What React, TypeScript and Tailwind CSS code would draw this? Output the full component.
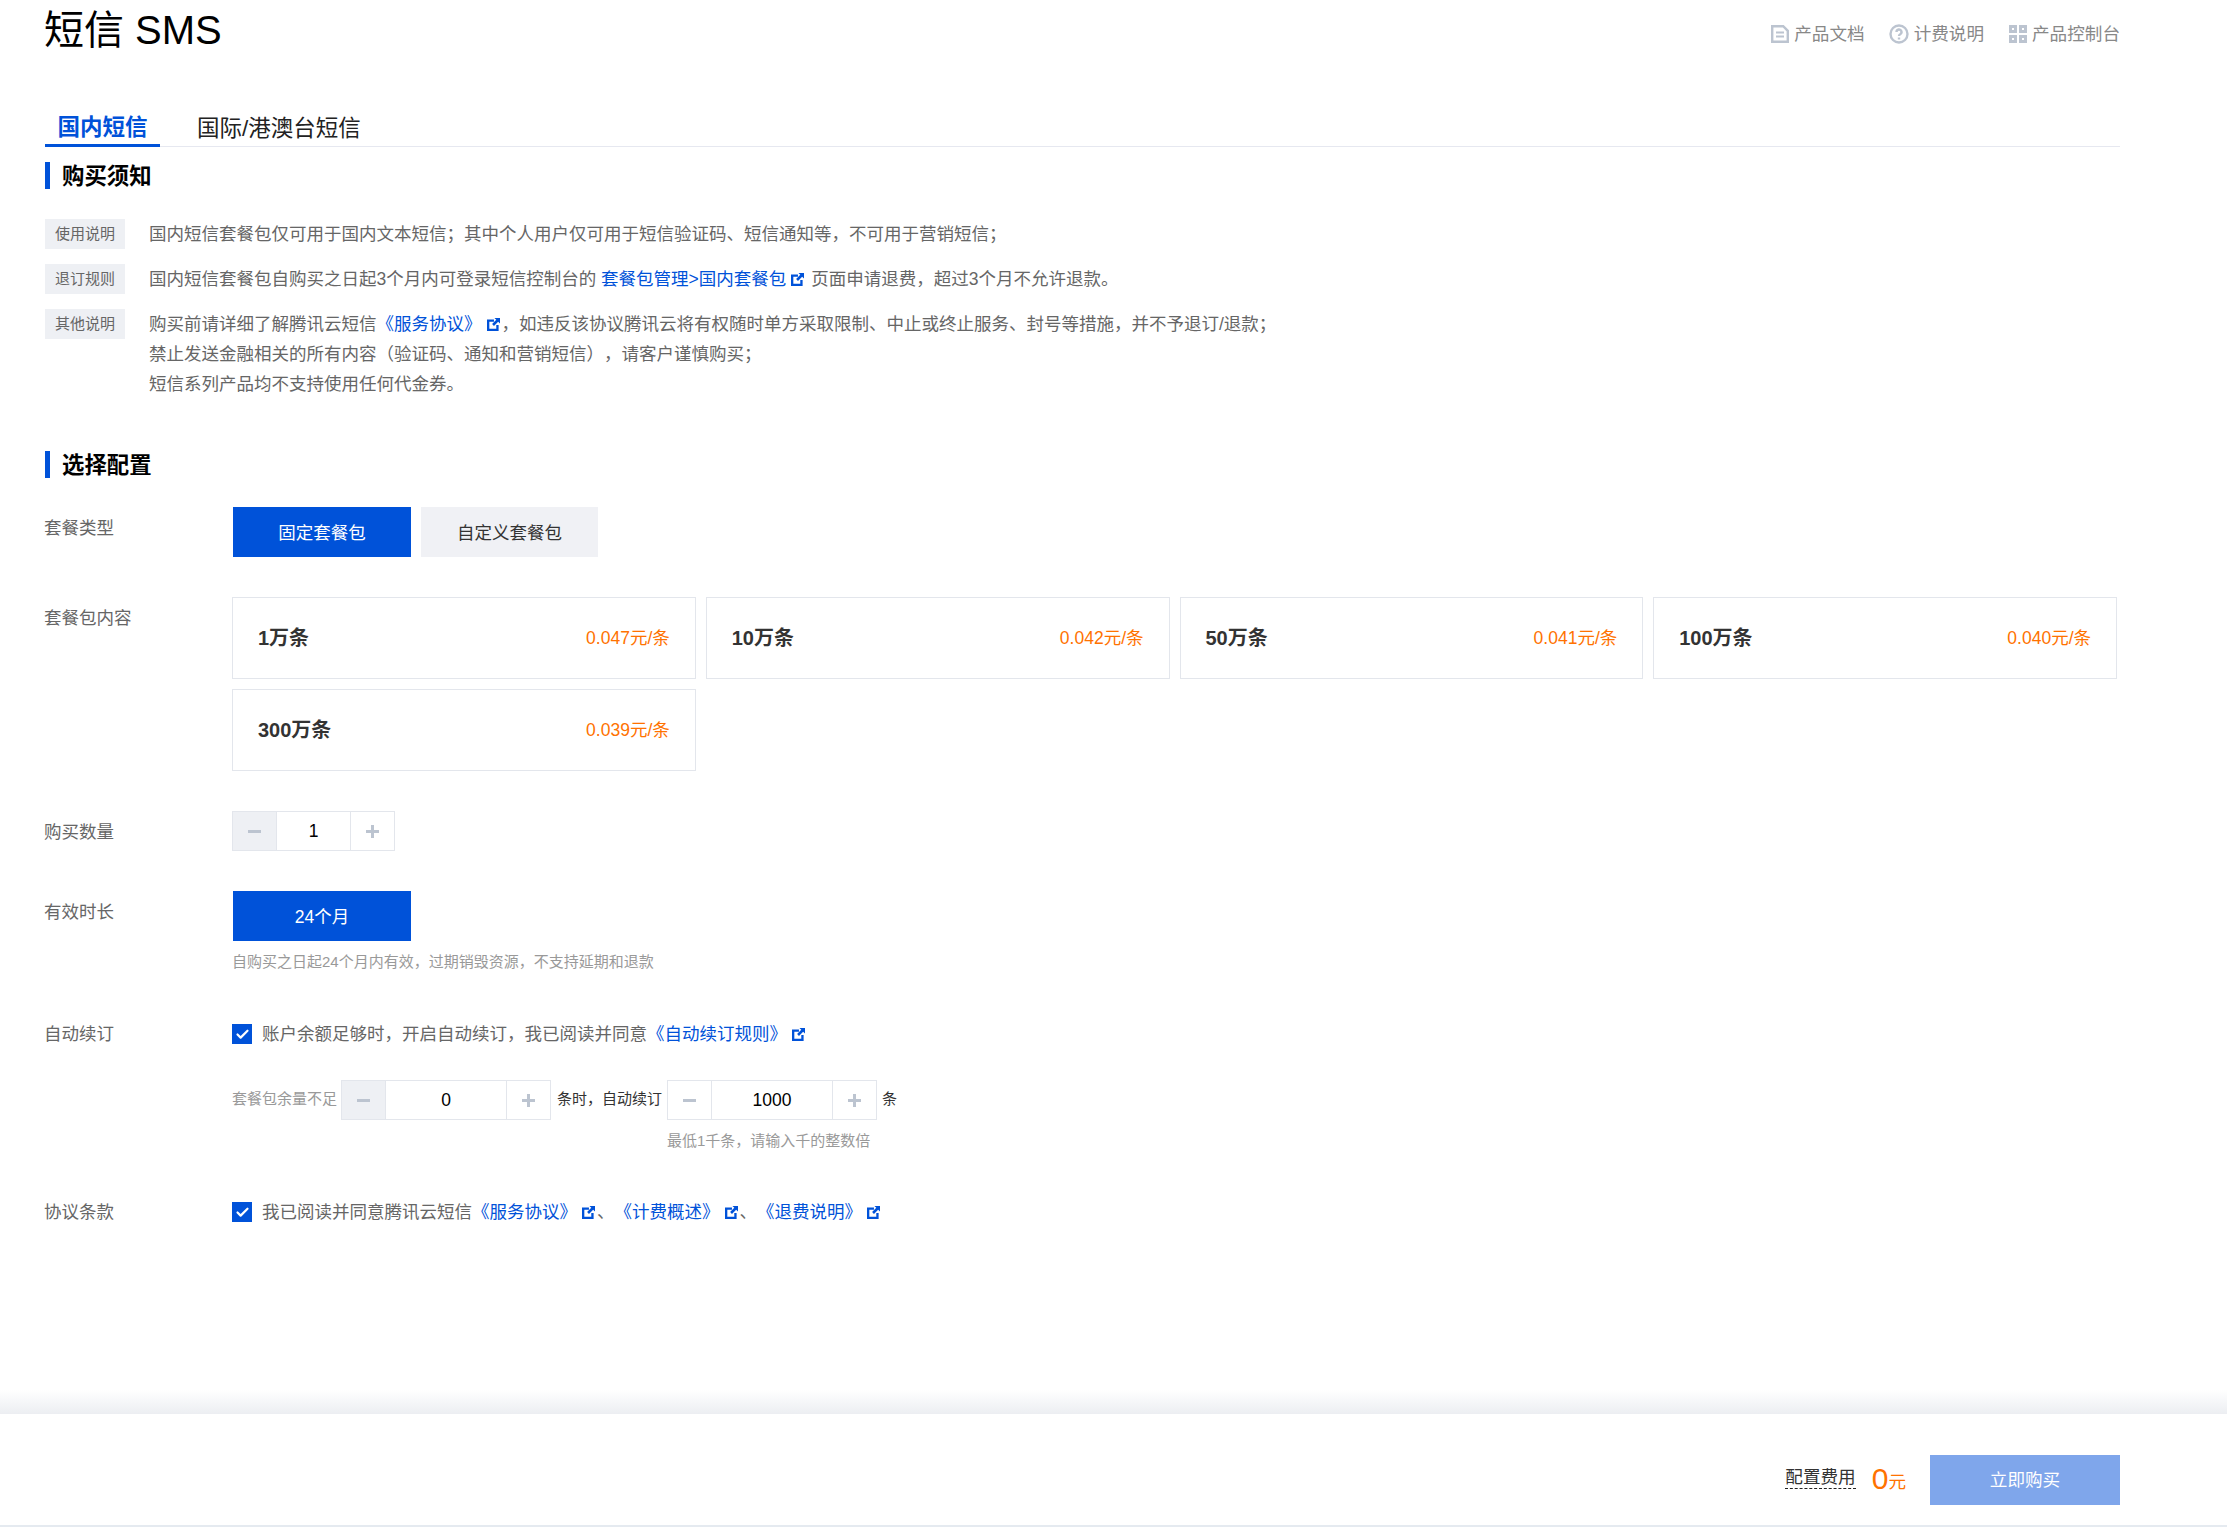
import React from 'react';
import { Check } from 'lucide-react';

const FONT = '"Liberation Sans", "Noto Sans CJK SC", sans-serif';

const PACKAGES = [
  { name: '1万条', price: '0.047元/条' },
  { name: '10万条', price: '0.042元/条' },
  { name: '50万条', price: '0.041元/条' },
  { name: '100万条', price: '0.040元/条' },
  { name: '300万条', price: '0.039元/条' },
];

const ExternalIcon = () => (
  <svg viewBox="0 0 14 14" className="ml-[5px] mr-[2px] inline-block h-[13px] w-[13px] align-[-1px]">
    <path d="M0 1.500h7.500v2.500H2.500v7.500H10V7.500h2.500V14H0z" fill="#0052d9" />
    <path d="M8 0h6v6l-2-2-4.500 4.500-2-2L10 2z" fill="#0052d9" />
  </svg>
);

const Link = ({ children }: { children: React.ReactNode }) => (
  <span className="text-[#0052d9]">
    {children}
    <ExternalIcon />
  </span>
);

const SectionTitle = ({ children, className }: { children: string; className: string }) => (
  <div className={`flex h-[27px] items-center border-l-[5px] border-[#0052d9] pl-3 pt-[2px] text-[22.4px] font-bold text-black ${className}`}>
    {children}
  </div>
);

const Tag = ({ children }: { children: string }) => (
  <span className="flex h-[30px] w-20 shrink-0 items-center justify-center bg-[#eef0f4] text-[15px] text-[#666]">
    {children}
  </span>
);

const Checkbox = () => (
  <span className="flex h-5 w-5 shrink-0 items-center justify-center bg-[#0052d9] text-white">
    <Check size={15} strokeWidth={3.5} />
  </span>
);

const Stepper = ({ value, width, grayMinus }: { value: string; width: number; grayMinus?: boolean }) => (
  <div className="flex h-10 shrink-0 border border-[#e3e6ec] text-[17.5px] text-black">
    <span className={`flex w-11 items-center justify-center border-r border-[#e3e6ec] ${grayMinus ? 'bg-[#eef0f4]' : 'bg-white'}`}>
      <span className="h-[3px] w-[13px] bg-[#bcc4d0]" />
    </span>
    <span className="flex items-center justify-center" style={{ width }}>
      {value}
    </span>
    <span className="relative flex w-11 items-center justify-center border-l border-[#e3e6ec]">
      <span className="h-[3px] w-[13px] bg-[#bcc4d0]" />
      <span className="absolute h-[13px] w-[3px] bg-[#bcc4d0]" />
    </span>
  </div>
);

const Label = ({ children, className = '' }: { children: string; className?: string }) => (
  <div className={`-ml-px w-[188px] shrink-0 text-[17.5px] text-[#666] ${className}`}>{children}</div>
);

export default function App() {
  return (
    <div className="flex h-[1527px] w-[2227px] flex-col overflow-hidden bg-white [text-spacing-trim:space-all]" style={{ fontFamily: FONT }}>
      <div className="flex-1 pl-[45px] pr-[107px]">
        <div className="flex h-[58px] items-center justify-between">
          <h1 className="-ml-px pt-[1px] text-[40px] font-normal leading-[58px] text-black">短信 SMS</h1>
          <div className="mt-[10px] flex items-center text-[17.6px] text-[#888]">
            <svg viewBox="0 0 18 18" className="mr-[5px] h-[18px] w-[18px]" fill="none" stroke="#bcc4d0" strokeWidth="2.400">
              <path d="M1.200 1.200h11l4.600 4.600v11H1.200z" />
              <path d="M5 7.500h8M5 11.500h8" strokeWidth="2" />
            </svg>
            产品文档
            <svg viewBox="0 0 20 20" className="ml-[24px] mr-[5px] h-5 w-5" fill="none" stroke="#bcc4d0" strokeWidth="2.400">
              <circle cx="10" cy="10" r="8.500" />
              <path d="M7.500 8a2.500 2.500 0 1 1 3.700 2.200c-.8.4-1.200.9-1.200 1.800" />
              <path d="M10 13.500v2" />
            </svg>
            计费说明
            <svg viewBox="0 0 18 18" className="ml-[25px] mr-[5px] h-[18px] w-[18px]" fill="none" stroke="#bcc4d0" strokeWidth="3">
              <path d="M1.500 1.500h5v5h-5zM11.500 1.500h5v5h-5zM1.500 11.500h5v5h-5zM11.500 11.500h5v5h-5z" />
            </svg>
            产品控制台
          </div>
        </div>

        <div className="mt-[42px] flex h-[47px] border-b border-[#e6e8f0] text-[22.5px]">
          <div className="-mb-px flex h-[47px] w-[115px] items-center justify-center border-b-[3px] border-[#0052d9] pt-[12px] font-bold text-[#0052d9]">
            国内短信
          </div>
          <div className="ml-[37px] flex items-center pt-[11px] text-[#222]">国际/港澳台短信</div>
        </div>

        <SectionTitle className="mt-[15px]">购买须知</SectionTitle>

        <div className="mt-[30px] flex flex-col gap-[15px] text-[17.5px] leading-[30px] text-[#666]">
          <div className="flex gap-6">
            <Tag>使用说明</Tag>
            <p>国内短信套餐包仅可用于国内文本短信；其中个人用户仅可用于短信验证码、短信通知等，不可用于营销短信；</p>
          </div>
          <div className="flex gap-6">
            <Tag>退订规则</Tag>
            <p>
              国内短信套餐包自购买之日起3个月内可登录短信控制台的 <Link>套餐包管理&gt;国内套餐包</Link> 页面申请退费，超过3个月不允许退款。
            </p>
          </div>
          <div className="flex gap-6">
            <Tag>其他说明</Tag>
            <div>
              <p>
                购买前请详细了解腾讯云短信<Link>《服务协议》</Link>，如违反该协议腾讯云将有权随时单方采取限制、中止或终止服务、封号等措施，并不予退订/退款；
              </p>
              <p>禁止发送金融相关的所有内容（验证码、通知和营销短信），请客户谨慎购买；</p>
              <p>短信系列产品均不支持使用任何代金券。</p>
            </div>
          </div>
        </div>

        <SectionTitle className="mt-[52px]">选择配置</SectionTitle>

        <div className="mt-[29px] flex">
          <Label className="pt-[6px] leading-[30px]">套餐类型</Label>
          <div className="ml-px flex gap-[10px] text-[17.5px]">
            <div className="flex h-[50px] w-[178px] items-center justify-center bg-[#0052d9] pt-[2px] text-white">固定套餐包</div>
            <div className="flex h-[50px] w-[177px] items-center justify-center bg-[#f0f1f5] pt-[2px] text-[#333]">自定义套餐包</div>
          </div>
        </div>

        <div className="mt-10 flex">
          <Label className="pt-[6px] leading-[30px]">套餐包内容</Label>
          <div className="grid w-[1885px] grid-cols-4 gap-[10px]">
            {PACKAGES.map((item) => (
              <div key={item.name} className="flex h-[82px] items-center justify-between border border-[#e3e6ec] px-[25px]">
                <span className="text-[20px] font-bold text-[#333]">{item.name}</span>
                <span className="text-[17.5px] text-[#ff7200]">{item.price}</span>
              </div>
            ))}
          </div>
        </div>

        <div className="mt-10 flex items-center">
          <Label className="pt-[2px] leading-[30px]">购买数量</Label>
          <Stepper value="1" width={73} grayMinus />
        </div>

        <div className="mt-10 flex">
          <Label className="pt-[6px] leading-[30px]">有效时长</Label>
          <div>
            <div className="ml-px flex h-[50px] w-[178px] items-center justify-center bg-[#0052d9] pt-[2px] text-[17.5px] text-white">24个月</div>
            <p className="mt-[10px] text-[15px] leading-[22px] text-[#999]">自购买之日起24个月内有效，过期销毁资源，不支持延期和退款</p>
          </div>
        </div>

        <div className="mt-[51px] flex">
          <Label className="leading-5">自动续订</Label>
          <div>
            <div className="flex items-center gap-[10px] text-[17.5px] leading-5 text-[#666]">
              <Checkbox />
              <span>
                账户余额足够时，开启自动续订，我已阅读并同意<Link>《自动续订规则》</Link>
              </span>
            </div>
            <div className="mt-9 flex items-start text-[15px]">
              <span className="w-[109px] leading-[38px] text-[#999]">套餐包余量不足</span>
              <Stepper value="0" width={120} grayMinus />
              <span className="ml-[6px] w-[110px] leading-[38px] text-[#333]">条时，自动续订</span>
              <div>
                <Stepper value="1000" width={120} />
                <p className="mt-[10px] leading-[22px] text-[#999]">最低1千条，请输入千的整数倍</p>
              </div>
              <span className="ml-[5px] leading-[38px] text-[#333]">条</span>
            </div>
          </div>
        </div>

        <div className="mt-[50px] flex">
          <Label className="leading-5">协议条款</Label>
          <div className="flex items-center gap-[10px] text-[17.5px] leading-5 text-[#666]">
            <Checkbox />
            <span>
              我已阅读并同意腾讯云短信<Link>《服务协议》</Link>、<Link>《计费概述》</Link>、<Link>《退费说明》</Link>
            </span>
          </div>
        </div>
      </div>

      <div className="h-[24px] bg-gradient-to-b from-white to-[#eceef2]" />
      <div className="flex h-[113px] items-start justify-end border-b-2 border-[#e5eaf0] bg-white pr-[107px] pt-[41px]">
        <div className="flex h-[50px] items-center">
          <span className="mt-[-4px] border-b border-dashed border-[#222] text-[17.6px] leading-[21px] text-[#333]">配置费用</span>
          <span className="ml-4 mt-[-2px] text-[30px] leading-none text-[#ff7200]">0</span>
          <span className="mt-[6px] text-[17.6px] leading-none text-[#ff7200]">元</span>
          <button className="ml-6 h-[50px] w-[190px] bg-[#7fa6eb] text-[17.6px] text-white">立即购买</button>
        </div>
      </div>
    </div>
  );
}
